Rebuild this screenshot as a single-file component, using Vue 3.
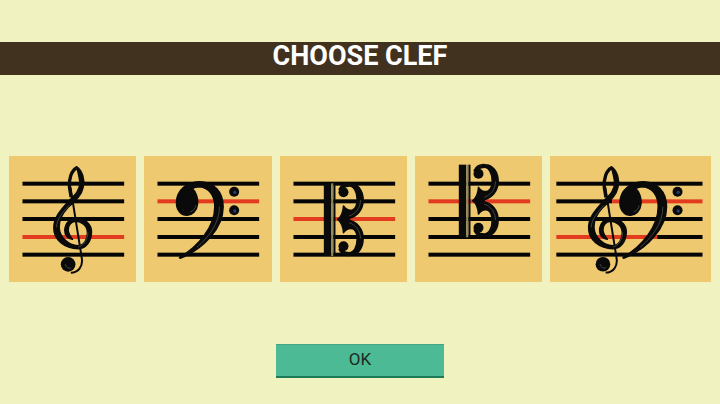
<template>
  <div class="screen">
    <h1 class="title">CHOOSE CLEF</h1>
    <div class="clef-row">
      <div
        v-for="card in cards"
        :key="card.name"
        class="clef-card"
        :class="{ wide: card.wide }"
      >
        <svg class="staff" :viewBox="`0 0 ${card.wide ? 485 : 381} 378`">
          <rect
            v-for="(seg, idx) in card.lines"
            :key="idx"
            :x="seg[0]"
            :y="seg[2] - 6"
            :width="seg[1] - seg[0]"
            height="12"
            :fill="seg[3] ? '#e33b1f' : '#050505'"
          />
          <g
            v-for="clef in card.clefs"
            :key="clef.type"
            :transform="`translate(${clef.x} ${clef.y})`"
          >
            <template v-if="clef.type === 'treble'">
              <path
                class="ink"
                d="M230 50 C248 62 256 90 250 112 C244 140 222 155 205 172 C188 190 177 210 178 232 C179 262 205 286 235 287 C252 288 264 268 263 247 C262 226 244 214 228 214 C212 214 204 228 205 241 C206 252 212 260 218 268 C204 266 194 254 195 240 C196 220 210 205 228 205 C255 205 276 222 275 248 C274 275 258 296 235 296 C195 296 161 270 162 232 C163 200 185 178 205 155 C225 135 240 122 240 100 C240 85 236 72 230 50 Z"
              />
              <path class="line" stroke-width="6" d="M212 112 L246 325 C250 350 235 368 213 368" />
              <path class="line" stroke-width="10" d="M230 54 C215 62 207 85 209 112 L214 142" />
              <circle cx="205" cy="343" r="22" fill="#0a0a0a" />
              <path
                class="gloss"
                d="M170 232 C171 205 190 186 208 166 M196 342 C198 352 206 356 214 354 M264 247 C264 270 250 288 235 291"
              />
            </template>
            <template v-else-if="clef.type === 'bass'">
              <path
                class="ink"
                d="M118 322 C175 290 224 230 224 170 C224 135 205 112 178 110 C168 110 160 113 156 116 C168 125 174 145 172 163 C170 183 156 196 141 196 C122 196 109 180 109 158 C109 122 140 95 178 95 C220 95 249 125 249 170 C249 235 190 297 120 325 Z"
              />
              <path
                class="gloss"
                d="M150 186 C160 182 166 174 167 166 M238 170 C238 220 205 262 170 292"
              />
              <circle cx="282" cy="125" r="15" fill="#0a0a0a" />
              <circle cx="282" cy="181" r="15" fill="#0a0a0a" />
              <circle cx="284" cy="127" r="5" fill="#2c3c66" />
              <circle cx="284" cy="183" r="5" fill="#2c3c66" />
            </template>
            <template v-else>
              <rect x="146" y="100" width="22" height="218" fill="#0a0a0a" />
              <rect x="168" y="100" width="7" height="218" fill="#8f8a5c" />
              <rect x="175" y="100" width="6" height="218" fill="#0a0a0a" />
              <g v-for="t in ['', 'translate(0 416) scale(1 -1)']" :key="t" :transform="t">
                <path
                  class="ink"
                  d="M188 208 C198 200 204 186 205 168 C212 178 222 182 232 180 C242 176 246 160 246 148 C246 125 236 108 222 108 C212 108 205 112 200 116 L192 118 C198 105 212 99 225 100 C248 100 264 122 264 150 C264 180 245 200 222 205 L222 208 Z"
                />
                <circle cx="205" cy="127" r="15" fill="#0a0a0a" />
                <path class="gloss" d="M256 150 C256 175 240 192 222 198" />
              </g>
            </template>
          </g>
        </svg>
      </div>
    </div>
    <button type="button" class="btn-ok">OK</button>
  </div>
</template>

<script setup>
const YS = [83, 136, 189, 243, 296]

function staff(redIndex) {
  return YS.map((y, i) => [40, 345, y, i === redIndex])
}

const cards = [
  { name: 'treble', lines: staff(3), clefs: [{ type: 'treble', x: -28, y: -18 }] },
  { name: 'bass', lines: staff(1), clefs: [{ type: 'bass', x: -12, y: -18 }] },
  { name: 'alto', lines: staff(2), clefs: [{ type: 'c', x: -15, y: -18 }] },
  { name: 'tenor', lines: staff(1), clefs: [{ type: 'c', x: -15, y: -74 }] },
  {
    name: 'grand',
    wide: true,
    lines: [
      [19, 458, 83, false],
      [19, 187, 136, false],
      [187, 458, 136, true],
      [19, 458, 189, false],
      [19, 322, 243, true],
      [322, 458, 243, false],
      [19, 458, 296, false]
    ],
    clefs: [
      { type: 'treble', x: -46, y: -18 },
      { type: 'bass', x: 101, y: -18 }
    ]
  }
]
</script>

<style>
html,
body {
  margin: 0;
  background: #f0f2c0;
}
</style>

<style scoped>
.screen {
  width: 720px;
  height: 404px;
  overflow: hidden;
  background: #f0f2c0;
  padding-top: 42px;
  box-sizing: border-box;
  font-family: Roboto, "Liberation Sans", sans-serif;
}

.title {
  margin: 0;
  height: 33px;
  line-height: 28px;
  background: #413220;
  color: #fff;
  font-size: 27px;
  font-weight: 700;
  text-align: center;
}

.clef-row {
  display: flex;
  gap: 8px;
  padding: 0 9px;
  margin-top: 81px;
}

.clef-card {
  flex: none;
  width: 127.3px;
  height: 126px;
  background: #efc96f;
}

.clef-card.wide {
  width: 161.5px;
  margin-left: -0.5px;
}

.staff {
  display: block;
  width: 100%;
  height: 100%;
}

.ink {
  fill: #0a0a0a;
  stroke: #0a0a0a;
  stroke-width: 4.5;
  stroke-linejoin: round;
}

.line {
  fill: none;
  stroke: #0a0a0a;
}

.gloss {
  fill: none;
  stroke: #77776e;
  stroke-width: 1.5;
}

.btn-ok {
  display: block;
  box-sizing: border-box;
  width: 168px;
  height: 34px;
  margin: 62px 0 0 276px;
  padding: 0 0 3px;
  background: #4cba94;
  border: none;
  border-top: 1px solid #45a585;
  border-bottom: 2px solid #1f7a57;
  color: #1c2a22;
  font-family: inherit;
  font-size: 17px;
}
</style>
